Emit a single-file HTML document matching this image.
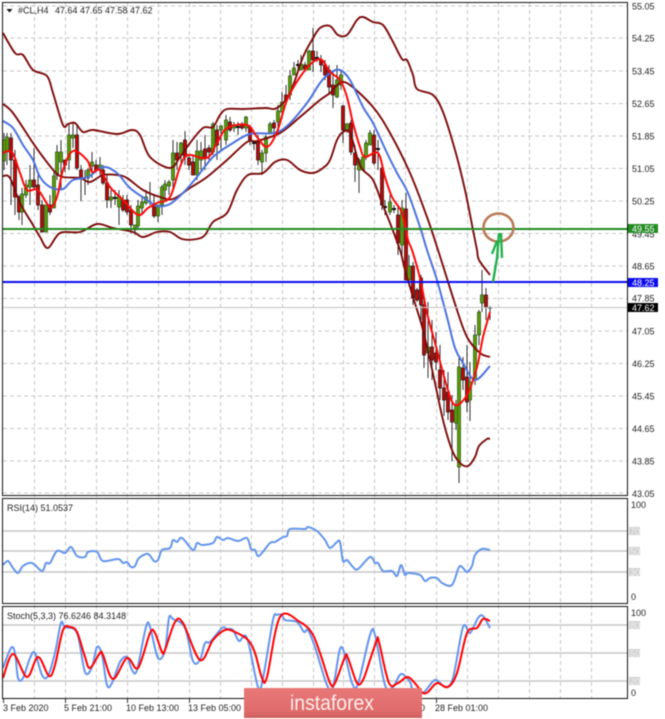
<!DOCTYPE html>
<html><head><meta charset="utf-8"><style>
html,body{margin:0;padding:0;background:#fff;width:665px;height:719px;overflow:hidden}
svg{display:block;filter:blur(.4px)}
text{font-family:"Liberation Sans",sans-serif;font-size:9px;fill:#222}
.g{stroke:#c6c6c6;stroke-width:1;stroke-dasharray:4 3;fill:none}
.l{stroke:#c8c8c8;stroke-width:1.4;fill:none}
.f{stroke:#111;stroke-width:1;fill:none}
.bb{stroke:#7d0a0a;stroke-width:1.9;fill:none;stroke-linejoin:round}
.ma{stroke:#4c72e0;stroke-width:2;fill:none;stroke-linejoin:round}
.fa{stroke:#fa0a0a;stroke-width:2;fill:none;stroke-linejoin:round}
.sb{stroke:#6495ed;stroke-width:2;fill:none;stroke-linejoin:round}
.sr{stroke:#f00;stroke-width:2;fill:none;stroke-linejoin:round}
.lb{fill:#cfcfcf;stroke:none}
.lt{fill:#f4f4f4}
</style></head><body>
<svg width="665" height="719" viewBox="0 0 665 719" xmlns="http://www.w3.org/2000/svg">
<rect width="665" height="719" fill="#fff"/>
<!-- grid -->
<path class="g" d="M34.5 3V699M65.5 3V699M96.5 3V699M127.5 3V699M158.5 3V699M189.5 3V699M220.5 3V699M251.5 3V699M282.5 3V699M313.5 3V699M343.5 3V699M374.5 3V699M405.5 3V699M436.5 3V699M467.5 3V699M498.5 3V699M529.5 3V699M560.5 3V699M591.5 3V699"/>
<path class="g" d="M3 6H627M3 38H627M3 71H627M3 103.5H627M3 136H627M3 168.5H627M3 201H627M3 233.5H627M3 266H627M3 298.5H627M3 331H627M3 363.5H627M3 396H627M3 428.5H627M3 461H627M3 493H627"/>
<!-- wicks -->
<path fill="none" stroke="#333" stroke-width="1" d="M4 133V170M7 133V165M11 133V205M15 150V215M19 195V220M22 188V225M26 180V198M30 165V205M34 148V190M38 175V210M42 200V232M46 205V232M50 195V215M54 170V208M57 145V180M61 140V190M65 160V172M69 125V170M73 123V148M77 125V170M81 165V201M85 170V195M88 168V185M92 152V178M96 160V172M100 157V175M103 165V185M107 175V208M111 190V208M115 190V205M119 190V225M123 195V212M127 195V215M131 205V233M135 225V235M138 200V228M142 198V215M146 190V205M150 182V205M154 195V218M158 205V222M162 185V215M165 180V200M169 180V195M173 140V190M177 142V170M181 142V165M185 131V165M189 155V170M193 155V175M197 140V180M201 142V170M205 135V170M209 145V160M213 122V155M217 125V160M221 125V150M226 115V145M230 117V132M234 122V132M238 122V135M242 122V130M246 116V132M250 125V145M254 142V150M258 135V165M262 150V175M266 135V162M270 122V133M274 120V135M278 105V130M282 92V118M286 85V105M290 70V100M294 62V75M298 60V70M301 55V70M305 62V72M309 50V70M313 28V72M317 51V62M321 55V72M325 60V80M329 65V95M333 70V108M337 65V98M341 70V90M343 105V143M347 123V133M351 120V155M355 145V182M359 158V193M363 157V170M366 140V160M370 130V145M374 130V165M378 140V170M382 165V210M385 200V215M390 195V215M394 205V213M398 205V255M402 200V260M406 193V280M409 255V285M413 262V305M417 288V302M421 275V320M424 300V368M428 302V378M432 320V380M436 332V370M440 345V400M444 370V416M448 372V420M452 395V461M456 400V430M459 357V483M463 357V390M467 345V412M470 362V421M475 325V385M479 310V345M482 270V312M486 288V320M490 306V320"/>
<!-- red bodies -->
<path fill="#c80808" stroke="#2a1010" stroke-width=".8" d="M9.5 138h3V160h-3zM13.5 160h3V197h-3zM17.5 197h3V212h-3zM32.5 180h3V187h-3zM36.5 185h3V205h-3zM40.5 205h3V232h-3zM48.5 205h3V212h-3zM63.5 160h3V165h-3zM75.5 135h3V168h-3zM79.5 170h3V178h-3zM94.5 165h3V170h-3zM101.5 170h3V183h-3zM105.5 183h3V200h-3zM121.5 200h3V210h-3zM125.5 200h3V212h-3zM129.5 210h3V225h-3zM152.5 204h3V216h-3zM175.5 153h3V160h-3zM183.5 140h3V157h-3zM187.5 158h3V165h-3zM191.5 162h3V175h-3zM203.5 149h3V158h-3zM207.5 148h3V152h-3zM215.5 130h3V145h-3zM228.5 122h3V130h-3zM240.5 125h3V128h-3zM248.5 127h3V140h-3zM256.5 142h3V160h-3zM272.5 123h3V128h-3zM284.5 95h3V100h-3zM303.5 65h3V69h-3zM311.5 51h3V60h-3zM319.5 60h3V65h-3zM323.5 65h3V75h-3zM327.5 70h3V87h-3zM331.5 85h3V95h-3zM341.5 106h3V130h-3zM349.5 123h3V152h-3zM353.5 153h3V165h-3zM372.5 135h3V163h-3zM380.5 168h3V205h-3zM396.5 215h3V243h-3zM404.5 209h3V280h-3zM411.5 266h3V298h-3zM415.5 290h3V300h-3zM419.5 278h3V305h-3zM422.5 305h3V355h-3zM430.5 347h3V360h-3zM434.5 353h3V362h-3zM438.5 370h3V388h-3zM442.5 388h3V400h-3zM446.5 392h3V412h-3zM450.5 410h3V422h-3zM461.5 368h3V380h-3zM465.5 377h3V402h-3zM484.5 295h3V307h-3z"/>
<!-- green bodies -->
<path fill="#5f9e06" stroke="#2f5a18" stroke-width=".8" d="M2.5 140h3V161h-3zM5.5 137h3V152h-3zM20.5 194h3V212h-3zM24.5 185h3V195h-3zM28.5 180h3V187h-3zM44.5 205h3V232h-3zM52.5 176h3V208h-3zM55.5 152h3V175h-3zM59.5 152h3V162h-3zM67.5 135h3V160h-3zM71.5 135h3V138h-3zM86.5 170h3V178h-3zM90.5 162h3V166h-3zM98.5 165h3V170h-3zM109.5 197h3V200h-3zM117.5 196h3V207h-3zM133.5 225h3V230h-3zM136.5 206h3V226h-3zM140.5 202h3V208h-3zM144.5 197h3V203h-3zM156.5 205h3V216h-3zM160.5 187h3V205h-3zM163.5 184h3V190h-3zM167.5 182h3V186h-3zM171.5 153h3V180h-3zM179.5 143h3V155h-3zM195.5 151h3V175h-3zM199.5 151h3V160h-3zM211.5 124h3V152h-3zM219.5 126h3V130h-3zM224.5 120h3V140h-3zM232.5 125h3V128h-3zM244.5 117h3V128h-3zM260.5 153h3V162h-3zM264.5 137h3V153h-3zM268.5 124h3V133h-3zM276.5 111h3V122h-3zM280.5 102h3V112h-3zM288.5 76h3V95h-3zM292.5 68h3V75h-3zM299.5 64h3V70h-3zM307.5 51h3V70h-3zM335.5 80h3V97h-3zM339.5 75h3V85h-3zM345.5 124h3V130h-3zM357.5 160h3V170h-3zM361.5 157h3V170h-3zM364.5 143h3V157h-3zM368.5 133h3V145h-3zM388.5 202h3V212h-3zM400.5 208h3V245h-3zM407.5 266h3V280h-3zM426.5 347h3V353h-3zM454.5 405h3V423h-3zM457.5 367h3V467h-3zM468.5 382h3V400h-3zM473.5 335h3V380h-3zM477.5 312h3V335h-3zM480.5 295h3V303h-3z"/>
<path fill="#111" d="M376 148h4v2h-4zM383 206h4v2h-4zM392 208h4v2h-4zM236 126h4v2h-4zM252 142h4v2h-4zM315 57h4v2h-4zM296 64h4v2h-4zM113 197h4v2h-4zM488 307h4v1.5h-4z"/>
<!-- bollinger -->
<polyline class="bb" points="3,33 15,53 23,55 33,70 47,76 53,93 63,125 68,124 75,123 83,132 93,130 117,134 132,130 140,135 150,157 170,168 180,157 190,143 203,128 213,127 220,115 227,109 243,109 265,108 277,108 290,93 303,57 312,40 320,28 330,26 338,35 347,35 357,20 363,17 373,22 383,25 392,40 402,59 407,60 413,75 417,89 433,95 443,112 455,150 465,190 473,230 477,250 479,260 490,275"/>
<polyline class="bb" points="3,104 13,113 33,143 43,157 55,172 63,177 80,178 90,182 103,175 117,175 127,178 143,190 160,197 173,199 190,188 207,177 227,160 247,142 257,141 280,133 300,117 320,100 330,93 340,83 350,85 373,107 390,133 410,173 427,217 438,250 457,310 467,337 480,353 490,357"/>
<polyline class="bb" points="3,176 10,178 20,203 33,225 40,237 48,248 60,233 80,232 97,224 113,228 133,232 143,237 157,232 170,232 182,239 197,239 205,235 213,222 227,213 237,190 248,175 263,173 275,162 287,160 300,170 313,173 323,168 330,160 337,140 343,132 350,133 358,160 363,170 373,180 382,203 390,223 400,250 405,270 413,297 423,330 435,383 443,420 452,450 460,463 468,466 475,457 479,446 487,439 490,439"/>
<!-- MAs -->
<polyline class="ma" points="3,121 13,128 23,145 33,160 40,177 50,187 63,189 73,180 88,177 103,167 117,173 130,188 147,200 157,206 170,204 183,193 197,177 213,157 233,143 250,134 273,133 287,126 307,103 320,83 330,73 340,70 350,80 363,107 373,123 387,153 397,173 408,193 420,227 427,250 437,280 447,317 455,348 463,363 475,380 490,366"/>
<polyline class="fa" points="3,153 12,152 20,173 27,190 38,190 50,207 57,197 63,170 73,151 87,160 92,172 100,170 110,187 123,200 138,215 148,208 157,203 170,197 180,167 188,155 207,158 217,143 227,128 247,125 257,137 267,147 277,132 287,100 300,77 313,62 322,60 330,72 340,80 347,97 353,123 360,147 365,157 378,153 385,177 392,197 402,213 408,240 412,250 420,278 427,313 437,350 447,387 455,405 467,395 477,367 483,337 490,312"/>
<!-- RSI / Stoch levels -->
<path class="l" d="M3 531H627M3 551H627M3 572H627M3 625H627M3 653H627M3 681H627"/>
<polyline class="sb" points="3,565 8,561 13,568 18,573 23,566 32,563 42,571 46,563 50,563 57,551 65,553 71,547 77,556 85,557 88,552 97,552 103,561 118,559 123,563 127,562 131,567 135,566 139,558 148,554 154,561 158,560 162,550 170,548 173,540 177,542 182,538 193,550 197,543 202,545 213,543 217,537 223,540 228,538 238,541 247,538 251,549 255,550 259,556 270,543 275,542 283,537 287,536 290,529 305,529 308,527 317,531 325,540 330,548 337,542 340,542 343,561 347,560 353,567 358,569 370,557 375,563 378,563 383,571 392,571 397,576 401,565 405,575 408,573 420,575 425,581 430,578 437,578 442,583 452,585 459,567 463,568 467,572 472,566 475,555 482,549 490,550"/>
<polyline class="sb" points="3,668 11,648 15,653 18,678 23,678 30,658 35,653 42,675 48,676 55,653 61,623 65,627 77,633 85,672 92,667 97,647 102,655 107,685 112,683 120,662 127,657 132,670 137,670 146,627 150,627 158,658 165,650 169,618 173,619 185,628 193,661 200,660 205,643 210,642 222,628 227,629 233,630 239,641 247,638 258,687 263,678 273,620 277,615 282,615 285,620 297,622 304,632 308,630 315,647 327,685 333,687 340,649 345,655 352,683 358,684 370,635 375,635 385,685 393,687 401,674 410,682 413,690 423,693 435,680 445,687 453,678 463,627 470,633 478,618 483,616 490,628"/>
<polyline class="sr" points="3,678 13,654 27,677 38,657 49,676 55,665 63,630 70,627 77,632 85,657 90,668 100,653 103,655 113,679 127,658 138,668 150,633 155,633 162,652 165,650 175,622 183,623 200,660 213,640 225,630 235,632 248,640 255,653 262,678 267,677 280,617 300,622 312,633 320,653 330,683 335,683 345,657 348,658 357,683 363,680 370,660 377,640 379,642 389,683 398,683 408,677 418,687 423,693 428,692 437,683 448,687 457,673 467,633 477,628 483,619 490,621"/>
<!-- horizontal levels -->
<path stroke="#c4c4c4" stroke-width="1" d="M3 307.5H627"/>
<path stroke="#228b22" stroke-width="2" d="M3 229H627"/>
<path stroke="#0a0af0" stroke-width="2" d="M3 282H627"/>
<!-- arrow & circle -->
<ellipse cx="498.5" cy="227.5" rx="15" ry="14" fill="none" stroke="#b97a57" stroke-width="2.6"/>
<path fill="none" stroke="#22b14c" stroke-width="2.4" d="M493 282L497 258L499 233M492 254L497 241M497 259L499 233M502 258L501 233"/>
<!-- frames -->
<path class="f" d="M2.5 2.5H627.5V495.5H2.5ZM2.5 498.5H627.5V603.5H2.5ZM2.5 606.5H627.5V698.5H2.5Z"/>
<path stroke="#333" stroke-width="1" d="M3.5 699V703M65.5 699V703M127.5 699V703M189.5 699V703M436.5 699V703"/>
<!-- title -->
<path d="M6.5 9h6l-3 3.5z" fill="#111"/>
<text x="18" y="13.5">#CL,H4</text><text x="55" y="13.5">47.64</text><text x="80" y="13.5">47.65</text><text x="105" y="13.5">47.58</text><text x="130" y="13.5">47.62</text>
<text x="7" y="511">RSI(14) 51.0537</text>
<text x="7" y="619">Stoch(5,3,3) 76.6246 84.3148</text>
<!-- price axis -->
<text x="632" y="9.5">55.05</text><text x="632" y="41.5">54.25</text><text x="632" y="74.5">53.45</text><text x="632" y="107">52.65</text><text x="632" y="139.5">51.85</text><text x="632" y="172">51.05</text><text x="632" y="204.5">50.25</text><text x="632" y="237.5">49.45</text><text x="632" y="269.5">48.65</text><text x="632" y="301.5">47.85</text><text x="632" y="334.5">47.05</text><text x="632" y="367">46.25</text><text x="632" y="399.5">45.45</text><text x="632" y="432">44.65</text><text x="632" y="464.5">43.85</text><text x="632" y="497">43.05</text>
<rect x="628" y="224" width="30" height="9" fill="#228b22"/><text x="632" y="232" style="fill:#fff">49.55</text>
<rect x="628" y="278" width="30" height="9" fill="#0a0af0"/><text x="632" y="286" style="fill:#fff">48.25</text>
<rect x="628" y="303" width="30" height="9" fill="#000"/><text x="632" y="311" style="fill:#fff">47.62</text>
<!-- indicator axes -->
<text x="631" y="508">100</text><text x="631" y="600">0</text>
<rect class="lb" x="629" y="527" width="11" height="8"/><text class="lt" x="630" y="534.5">70</text>
<rect class="lb" x="629" y="547" width="11" height="8"/><text class="lt" x="630" y="554.5">50</text>
<rect class="lb" x="629" y="568" width="11" height="8"/><text class="lt" x="630" y="575.5">30</text>
<text x="631" y="616">100</text><text x="631" y="696">0</text>
<rect class="lb" x="629" y="621" width="11" height="8"/><text class="lt" x="630" y="628.5">80</text>
<rect class="lb" x="629" y="649" width="11" height="8"/><text class="lt" x="630" y="656.5">50</text>
<rect class="lb" x="629" y="677" width="11" height="8"/><text class="lt" x="630" y="684.5">20</text>
<!-- time axis -->
<text x="3" y="711">3 Feb 2020</text><text x="64" y="711">5 Feb 21:00</text><text x="126" y="711">10 Feb 13:00</text><text x="188" y="711">13 Feb 05:00</text><text x="420" y="711">0</text><text x="435" y="711">28 Feb 01:00</text>
<!-- banner -->
<defs><linearGradient id="bn" x1="0" y1="0" x2="0" y2="1"><stop offset="0" stop-color="#e87878"/><stop offset=".75" stop-color="#e06c6c"/><stop offset="1" stop-color="#cf6060"/></linearGradient></defs>
<rect x="244" y="688" width="178" height="30" fill="url(#bn)"/>
<text x="290" y="710" textLength="84" lengthAdjust="spacingAndGlyphs" style="font-size:21px;fill:#fbeeee">instaforex</text>
</svg>
<script>
document.querySelectorAll('polyline').forEach(function(e){
  var p=e.getAttribute('points').trim().split(/\s+/).map(function(s){return s.split(',').map(Number)});
  var d='M'+p[0].join(' ');
  for(var i=0;i<p.length-1;i++){
    var a=p[Math.max(i-1,0)],b=p[i],c=p[i+1],f=p[Math.min(i+2,p.length-1)];
    d+='C'+(b[0]+(c[0]-a[0])/6).toFixed(1)+' '+(b[1]+(c[1]-a[1])/6).toFixed(1)+' '+(c[0]-(f[0]-b[0])/6).toFixed(1)+' '+(c[1]-(f[1]-b[1])/6).toFixed(1)+' '+c[0]+' '+c[1];
  }
  var n=document.createElementNS('http://www.w3.org/2000/svg','path');
  n.setAttribute('class',e.getAttribute('class'));
  n.setAttribute('d',d);
  e.parentNode.replaceChild(n,e);
});
</script>
</body></html>
